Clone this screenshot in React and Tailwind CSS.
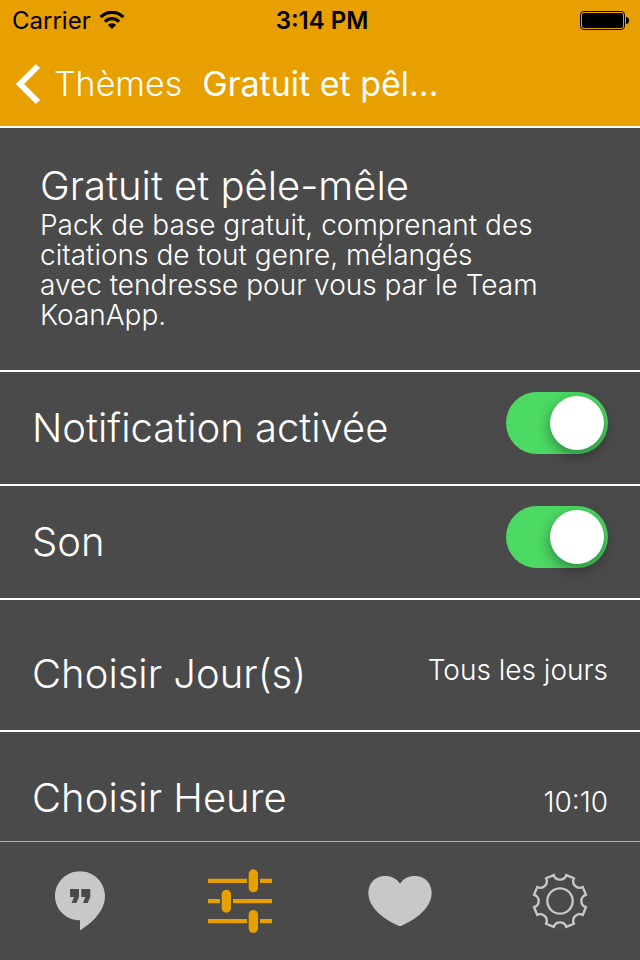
import React, { useState } from 'react';

const StatusBar = () => (
  <div className="grid h-[42px] grid-cols-3 items-center pl-3 pr-2 text-2xl text-black">
    <div className="flex items-center gap-2">
      <span>Carrier</span>
      <svg viewBox="0 0 26 20" className="h-5 w-[26px]" aria-label="Wi-Fi">
        <g fill="none" stroke="currentColor" strokeWidth="3.2">
          <path d="M1.6 6.2 A16 16 0 0 1 24.4 6.2" />
          <path d="M6 10.6 A9.9 9.9 0 0 1 20 10.6" />
        </g>
        <path d="M13 18 L8.9 13.9 A5.8 5.8 0 0 1 17.1 13.9 Z" fill="currentColor" />
      </svg>
    </div>
    <span className="text-center font-semibold">3:14 PM</span>
    <svg viewBox="0 0 52 20" className="h-5 w-[52px] justify-self-end" aria-label="Battery">
      <rect x="0.5" y="0.5" width="44" height="18" rx="3.2" fill="none" stroke="currentColor" strokeWidth="1" />
      <rect x="2" y="2" width="41" height="15" rx="2" fill="currentColor" />
      <path d="M46 6 C48 6.2 49 7.4 49 9.5 C49 11.6 48 12.8 46 13 Z" fill="currentColor" />
    </svg>
  </div>
);

const NavBar = () => (
  <div className="flex h-[84px] items-center gap-5 px-4 text-[34px] leading-10 text-white">
    <a href="#themes" className="flex items-center gap-3 font-light">
      <svg viewBox="0 0 26 42" className="h-[42px] w-[26px]" fill="none" stroke="currentColor" strokeWidth="6">
        <path d="M22 3 L4 21 L22 39" />
      </svg>
      <span>Thèmes</span>
    </a>
    <h1>Gratuit et pêl...</h1>
  </div>
);

const SwitchRow = ({ id, label, checked, onChange }) => (
  <div className="flex items-start justify-between border-b-2 border-white px-8 pb-[30px] pt-5">
    <label htmlFor={id} className="pt-3 text-[40px] font-light leading-[48px]">{label}</label>
    <input
      id={id}
      type="checkbox"
      role="switch"
      checked={checked}
      onChange={(e) => onChange(e.target.checked)}
      className="flex h-[62px] w-[102px] shrink-0 appearance-none items-center rounded-full bg-gray-400 px-1 before:h-[54px] before:w-[54px] before:rounded-full before:bg-white before:shadow-[0_5px_14px_rgba(0,0,0,0.4)] before:content-[''] checked:justify-end checked:bg-[#4cd964]"
    />
  </div>
);

const BubbleIcon = () => (
  <svg viewBox="42 90 216 216" className="h-[72px] w-[72px]" fill="currentColor">
    <path
      fillRule="evenodd"
      d="M150 109 C109 109 75 142 75 183 C75 224 109 256 150 256 V286 C186 264 225 228 225 183 C225 142 191 109 150 109 Z M120 162 H147 V186 L139 204 H125 L132 186 H120 Z M154 162 H181 V186 L173 204 H159 L166 186 H154 Z"
    />
  </svg>
);

const SlidersIcon = () => (
  <svg viewBox="42 45 216 216" className="h-[72px] w-[72px]" fill="currentColor">
    <path d="M54 86 H171 V99 H54 Z M210 86 H246 V99 H210 Z" />
    <path d="M54 147 H90 V160 H54 Z M129 147 H246 V160 H129 Z" />
    <path d="M54 207 H171 V220 H54 Z M210 207 H246 V220 H210 Z" />
    <rect x="176" y="58" width="28" height="69" rx="14" />
    <rect x="95" y="119" width="28" height="69" rx="14" />
    <rect x="176" y="180" width="28" height="69" rx="14" />
  </svg>
);

const HeartIcon = () => (
  <svg viewBox="42 45 216 216" className="h-[72px] w-[72px]" fill="currentColor">
    <path d="M150 101 C140 86 125 78 105 78 C76 78 55 100 55 129 C55 170 97 206 145 227 Q150 229 155 227 C203 206 245 170 245 129 C245 100 224 78 195 78 C175 78 160 86 150 101 Z" />
  </svg>
);

const GearIcon = () => (
  <svg viewBox="-108 -108 216 216" className="h-[72px] w-[72px]" fill="none" stroke="currentColor" strokeWidth="7">
    <path d="M18.7 -77.8 L41.8 -68.2 A19.6 19.6 0 0 0 68.2 -41.8 L77.8 -18.7 A19.6 19.6 0 0 0 77.8 18.7 L68.2 41.8 A19.6 19.6 0 0 0 41.8 68.2 L18.7 77.8 A19.6 19.6 0 0 0 -18.7 77.8 L-41.8 68.2 A19.6 19.6 0 0 0 -68.2 41.8 L-77.8 18.7 A19.6 19.6 0 0 0 -77.8 -18.7 L-68.2 -41.8 A19.6 19.6 0 0 0 -41.8 -68.2 L-18.7 -77.8 A19.6 19.6 0 0 0 18.7 -77.8 Z" />
    <circle r="38" />
  </svg>
);

const tabs = [
  { id: 'citations', label: 'Citations', Icon: BubbleIcon },
  { id: 'themes', label: 'Thèmes', Icon: SlidersIcon },
  { id: 'favoris', label: 'Favoris', Icon: HeartIcon },
  { id: 'reglages', label: 'Réglages', Icon: GearIcon },
];

const App = () => {
  const [notification, setNotification] = useState(true);
  const [sound, setSound] = useState(true);
  const [activeTab, setActiveTab] = useState('themes');

  return (
    <div className="flex min-h-screen flex-col bg-[#4a4a4a] font-['Inter',sans-serif] text-white">
      <header className="border-b-2 border-white bg-[#e89f00]">
        <StatusBar />
        <NavBar />
      </header>

      <main className="flex-1">
        {/* Pack description */}
        <section className="border-b-2 border-white px-10 pb-10 pt-[34px] font-light">
          <h2 className="text-[40px] leading-[48px]">Gratuit et pêle-mêle</h2>
          <p className="max-w-[500px] text-[28px] leading-[30px]">
            Pack de base gratuit, comprenant des citations de tout genre, mélangés avec tendresse pour vous par le Team KoanApp.
          </p>
        </section>

        <SwitchRow id="notification" label="Notification activée" checked={notification} onChange={setNotification} />
        <SwitchRow id="son" label="Son" checked={sound} onChange={setSound} />

        <button type="button" className="flex w-full items-start justify-between border-b-2 border-white px-8 pb-8 pt-[50px] font-light">
          <span className="text-[40px] leading-[48px]">Choisir Jour(s)</span>
          <span className="text-[28px] leading-10">Tous les jours</span>
        </button>
        <button type="button" className="flex w-full items-baseline justify-between px-8 pb-[19px] pt-[42px] font-light">
          <span className="text-[40px] leading-[48px]">Choisir Heure</span>
          <span className="text-[28px] leading-10">10:10</span>
        </button>
      </main>

      <nav className="grid grid-cols-4 border-t border-[#b2b2b2]">
        {tabs.map(({ id, label, Icon }) => (
          <button
            key={id}
            type="button"
            aria-label={label}
            onClick={() => setActiveTab(id)}
            className={`flex items-center justify-center py-[23px] ${activeTab === id ? 'text-[#e89f00]' : 'text-[#c8c8c8]'}`}
          >
            <Icon />
          </button>
        ))}
      </nav>
    </div>
  );
};

export default App;
